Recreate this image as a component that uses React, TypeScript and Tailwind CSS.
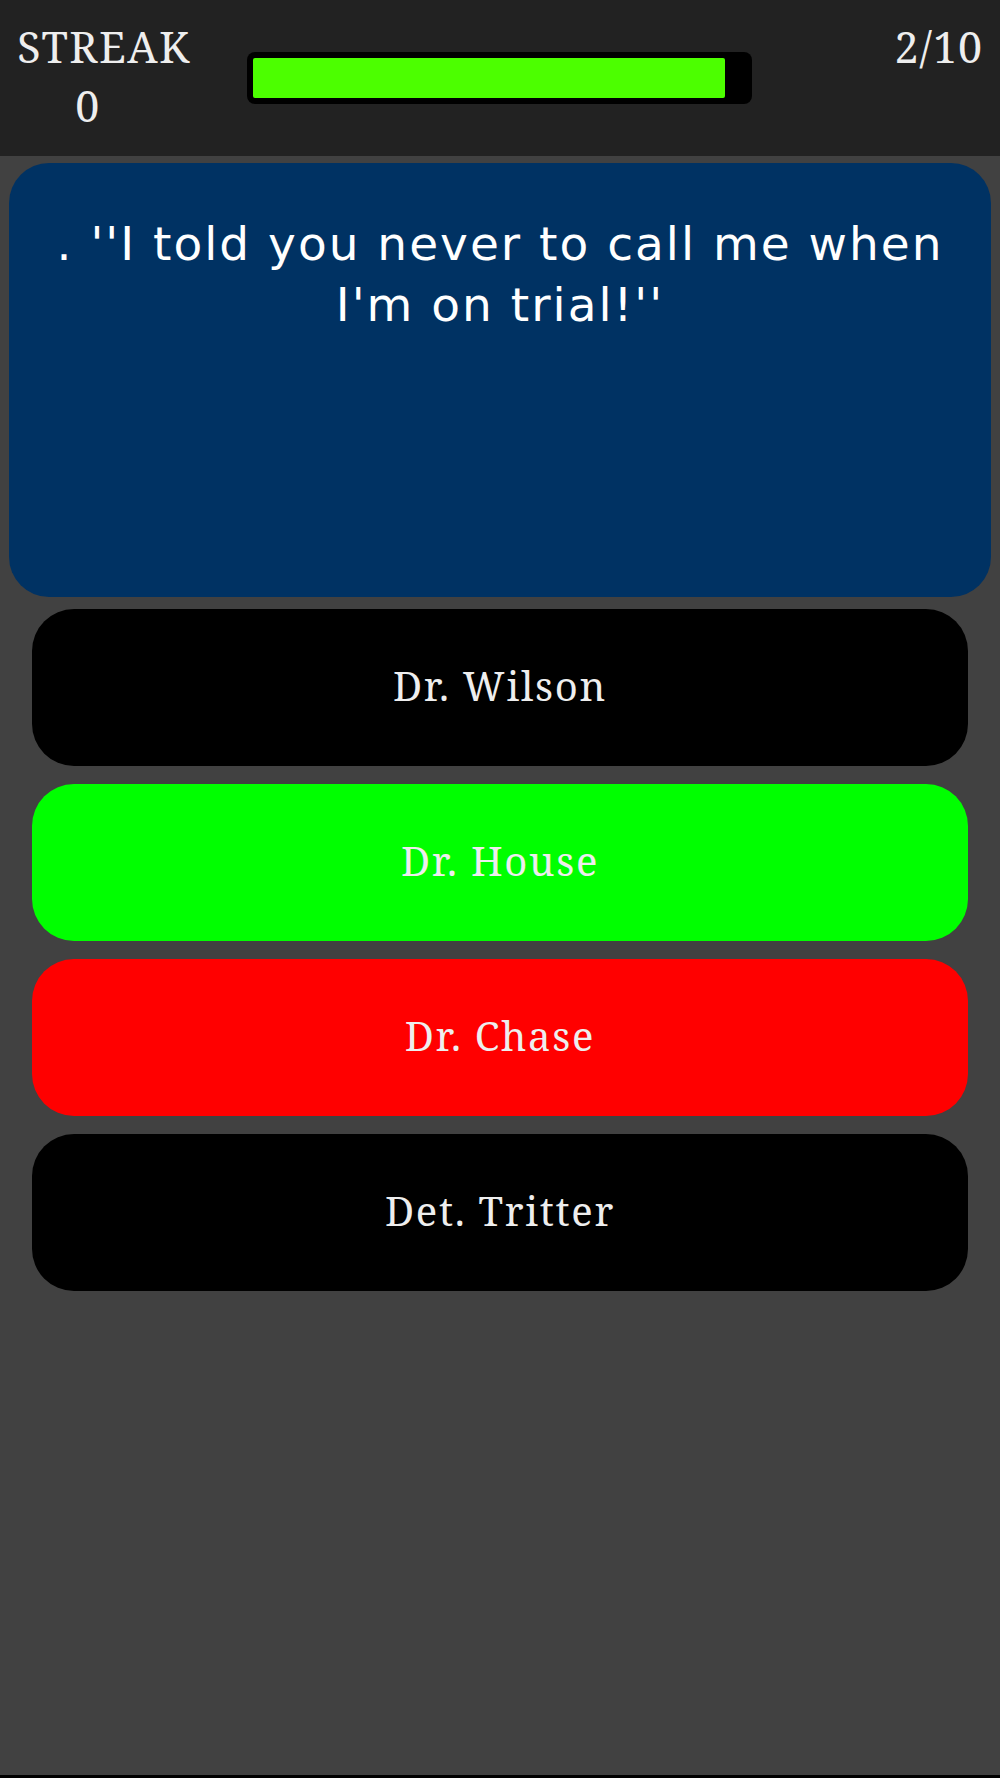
import React from "react";

const serif = { fontFamily: "'Noto Serif', 'DejaVu Serif', serif" } as React.CSSProperties;

function Answer({ label, bg }: { label: string; bg: string }) {
  return (
    <button
      className={`w-full h-[157px] rounded-[42px] flex items-center justify-center text-[40px] text-[#eeeeee] tracking-[1.7px] pb-[4px] ${bg}`}
      style={serif}
    >
      {label}
    </button>
  );
}

export default function App() {
  const progress = 472 / 493;
  return (
    <div className="w-[1000px] h-[1778px] bg-black">
      <div className="h-[1775px] bg-[#414141] flex flex-col">
        <header className="h-[156px] bg-[#222222] flex items-start shrink-0">
          <div className="w-[210px] pl-[14px] pt-[17px] text-[#eeeeee] text-[43px] leading-[59px] tracking-[1.5px]" style={serif}>
            <div className="w-[180px] text-center">STREAK</div>
            <div className="w-[180px] text-center pr-[32px]">0</div>
          </div>
          <div className="ml-[37px] mt-[52px] w-[505px] h-[52px] bg-black rounded-[8px] p-[6px]">
            <div className="h-full bg-[#4cff00] rounded-[2px]" style={{ width: `${progress * 100}%` }} />
          </div>
          <div className="flex-1 flex justify-end pr-[17px] pt-[17px] text-[#eeeeee] text-[43px] leading-[59px] tracking-[1px]" style={serif}>
            2/10
          </div>
        </header>
        <div className="px-[9px] pt-[7px]">
          <div
            className="h-[434px] bg-[#003263] rounded-[40px] px-[24px] pt-[50px] text-center text-white text-[47px] leading-[61px] tracking-[2px]"
            style={{ fontFamily: "'DejaVu Sans', sans-serif" }}
          >
            . ''I told you never to call me when I'm on trial!''
          </div>
        </div>
        <div className="px-[32px] pt-[12px] flex flex-col gap-[18px]">
          <Answer label="Dr. Wilson" bg="bg-black" />
          <Answer label="Dr. House" bg="bg-[#00ff00]" />
          <Answer label="Dr. Chase" bg="bg-[#ff0000]" />
          <Answer label="Det. Tritter" bg="bg-black" />
        </div>
      </div>
    </div>
  );
}
